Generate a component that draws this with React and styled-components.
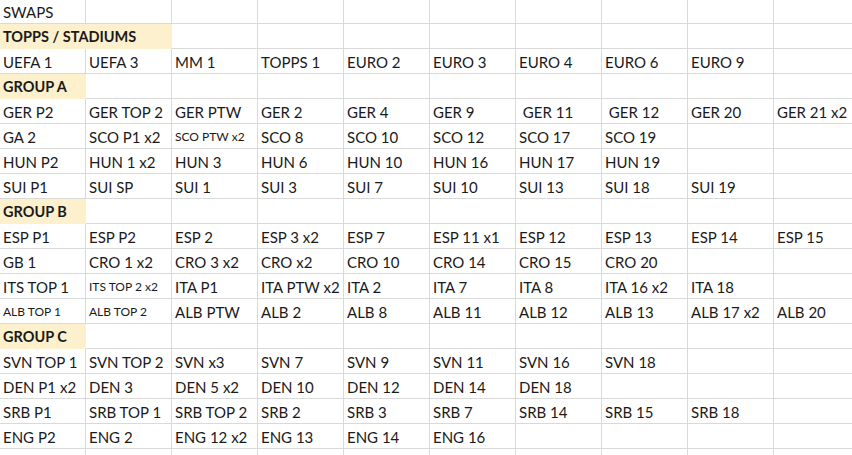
import React from 'react';
import styled, { createGlobalStyle } from 'styled-components';

const GlobalStyle = createGlobalStyle`
  body {
    margin: 0;
    background: #ffffff;
    overflow: hidden;
    font-family: Lato, "Open Sans", sans-serif;
  }
`;

const Sheet = styled.div`
  display: grid;
  grid-template-columns: repeat(10, 86px);
  grid-auto-rows: 25px;
  grid-template-rows: 24px;
  width: 860px;
`;

const Cell = styled.div`
  box-sizing: border-box;
  grid-column: span ${p => p.span || 1};
  border-right: 1px solid ${p => (p.header ? '#fdf0cc' : '#d9d9d9')};
  border-bottom: 1px solid ${p => (p.header ? '#fdf0cc' : '#d9d9d9')};
  background: ${p => (p.header ? '#fdf0cc' : '#ffffff')};
  padding: 1px 3px 0;
  display: flex;
  align-items: center;
  white-space: pre;
  overflow: hidden;
  color: #1a1a1a;
  font-size: ${p => (p.small ? '12px' : p.header ? '14.5px' : '15px')};
  font-weight: ${p => (p.header ? 700 : 400)};
`;

const rows = [
  ['SWAPS'],
  [{ text: 'TOPPS / STADIUMS', header: true, span: 2 }],
  ['UEFA 1', 'UEFA 3', 'MM 1', 'TOPPS 1', 'EURO 2', 'EURO 3', 'EURO 4', 'EURO 6', 'EURO 9'],
  [{ text: 'GROUP A', header: true }],
  ['GER P2', 'GER TOP 2', 'GER PTW', 'GER 2', 'GER 4', 'GER 9', ' GER 11', ' GER 12', 'GER 20', 'GER 21 x2'],
  ['GA 2', 'SCO P1 x2', { text: 'SCO PTW x2', small: true }, 'SCO 8', 'SCO 10', 'SCO 12', 'SCO 17', 'SCO 19'],
  ['HUN P2', 'HUN 1 x2', 'HUN 3', 'HUN 6', 'HUN 10', 'HUN 16', 'HUN 17', 'HUN 19'],
  ['SUI P1', 'SUI SP', 'SUI 1', 'SUI 3', 'SUI 7', 'SUI 10', 'SUI 13', 'SUI 18', 'SUI 19'],
  [{ text: 'GROUP B', header: true }],
  ['ESP P1', 'ESP P2', 'ESP 2', 'ESP 3 x2', 'ESP 7', 'ESP 11 x1', 'ESP 12', 'ESP 13', 'ESP 14', 'ESP 15'],
  ['GB 1', 'CRO 1 x2', 'CRO 3 x2', 'CRO x2', 'CRO 10', 'CRO 14', 'CRO 15', 'CRO 20'],
  ['ITS TOP 1', { text: 'ITS TOP 2 x2', small: true }, 'ITA P1', 'ITA PTW x2', 'ITA 2', 'ITA 7', 'ITA 8', 'ITA 16 x2', 'ITA 18'],
  [{ text: 'ALB TOP 1', small: true }, { text: 'ALB TOP 2', small: true }, 'ALB PTW', 'ALB 2', 'ALB 8', 'ALB 11', 'ALB 12', 'ALB 13', 'ALB 17 x2', 'ALB 20'],
  [{ text: 'GROUP C', header: true }],
  ['SVN TOP 1', 'SVN TOP 2', 'SVN x3', 'SVN 7', 'SVN 9', 'SVN 11', 'SVN 16', 'SVN 18'],
  ['DEN P1 x2', 'DEN 3', 'DEN 5 x2', 'DEN 10', 'DEN 12', 'DEN 14', 'DEN 18'],
  ['SRB P1', 'SRB TOP 1', 'SRB TOP 2', 'SRB 2', 'SRB 3', 'SRB 7', 'SRB 14', 'SRB 15', 'SRB 18'],
  ['ENG P2', 'ENG 2', 'ENG 12 x2', 'ENG 13', 'ENG 14', 'ENG 16'],
  [],
];

// pad each row out to 10 columns
const fillRow = row => {
  const cells = row.map(c => (typeof c === 'string' ? { text: c } : c));
  const used = cells.reduce((n, c) => n + (c.span || 1), 0);
  for (let i = used; i < 10; i++) cells.push({ text: '' });
  return cells;
};

export default function App() {
  return (
    <>
      <GlobalStyle />
      <Sheet>
        {rows.map((row, r) =>
          fillRow(row).map((c, i) => (
            <Cell key={r + '-' + i} header={c.header} span={c.span} small={c.small}>
              {c.text}
            </Cell>
          ))
        )}
      </Sheet>
    </>
  );
}
